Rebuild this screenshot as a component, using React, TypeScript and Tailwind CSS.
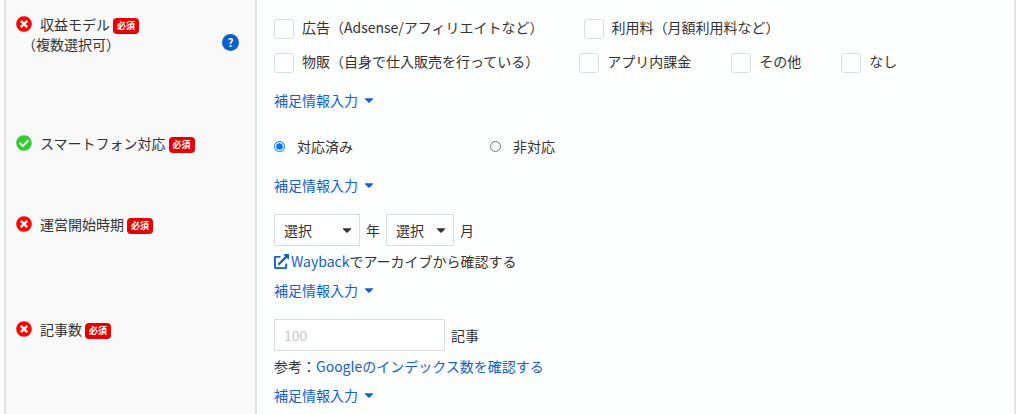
import type { ReactNode } from 'react';
import { FaCaretDown, FaCheckCircle, FaExternalLinkAlt, FaTimesCircle } from 'react-icons/fa';

interface FormRowProps {
  title: string;
  note?: string;
  done?: boolean;
  last?: boolean;
  children: ReactNode;
}

const MODEL_ROWS = [
  ['広告（Adsense/アフィリエイトなど）', '利用料（月額利用料など）'],
  ['物販（自身で仕入販売を行っている）', 'アプリ内課金', 'その他', 'なし'],
];

/**
 * One row of the form: heading cell on the left, inputs on the right
 */
function FormRow({ title, note, done, last, children }: FormRowProps) {
  return (
    <div className={last ? 'flex grow' : 'flex'}>
      <div className="w-[253px] shrink-0 border-x-2 border-[#e2e2e2] bg-[#f9f9f9] pt-3.5 pr-4 pl-2.5">
        <div className="flex h-5 items-center">
          {done ? (
            <FaCheckCircle className="size-4 shrink-0 text-[#33cc33]" />
          ) : (
            <FaTimesCircle className="size-4 shrink-0 text-[#ff0000]" />
          )}
          <span className="ml-2">{title}</span>
          <span className="mt-1 ml-[3px] h-4 rounded bg-[#e60000] px-1 text-[9px] leading-4 font-bold text-white">
            必須
          </span>
        </div>
        {note && (
          <div className="flex items-start justify-between pl-1.5">
            <span>{note}</span>
            <button
              type="button"
              aria-label="ヘルプ"
              className="size-[17px] rounded-full bg-[#0b61d0] text-center text-[11px] leading-[17px] font-bold text-white"
            >
              ?
            </button>
          </div>
        )}
      </div>
      <div className="grow pt-3.5 pb-[5px] pl-[17px]">{children}</div>
    </div>
  );
}

function SupplementToggle() {
  return (
    <button type="button" className="flex h-5 items-center gap-1 text-[#1460cc]">
      補足情報入力
      <FaCaretDown className="size-3.5" />
    </button>
  );
}

function PeriodSelect({ label, wide }: { label: string; wide?: boolean }) {
  return (
    <div className="relative">
      <select
        aria-label={label}
        className={`h-8 appearance-none border border-[#d9dcdc] bg-white pl-[9px] ${wide ? 'w-[86px]' : 'w-[68px]'}`}
      >
        <option>選択</option>
      </select>
      <FaCaretDown className="pointer-events-none absolute top-[9px] right-1.5 size-3.5" />
    </div>
  );
}

export default function App() {
  return (
    <div className="min-h-screen bg-white px-1 font-['Noto_Sans_CJK_JP',sans-serif] text-[14px] leading-5 text-[#333333]">
      <form className="mr-1 flex min-h-screen flex-col border-r-2 border-[#e2e2e2] bg-[#fdfefe]">
        <FormRow title="収益モデル" note="（複数選択可）">
          <div className="mb-4 flex flex-col gap-2">
            {MODEL_ROWS.map((row, index) => (
              <div key={index} className="flex h-[26px] gap-10">
                {row.map((name) => (
                  <label key={name} className="flex items-center gap-2">
                    <input
                      type="checkbox"
                      className="mt-1 size-5 appearance-none rounded-[3px] border border-[#dcdfdf] bg-white"
                    />
                    {name}
                  </label>
                ))}
              </div>
            ))}
          </div>
          <div className="pb-1">
            <SupplementToggle />
          </div>
        </FormRow>

        <FormRow title="スマートフォン対応" done>
          <div className="mb-4 flex h-[26px]">
            <label className="flex w-[216px] items-center gap-3">
              <input type="radio" name="smartphone" defaultChecked className="size-[11px]" />
              対応済み
            </label>
            <label className="flex items-center gap-3">
              <input type="radio" name="smartphone" className="size-[11px]" />
              非対応
            </label>
          </div>
          <SupplementToggle />
        </FormRow>

        <FormRow title="運営開始時期">
          <div className="mb-[5px] flex items-center gap-1.5">
            <PeriodSelect label="開始年" wide />
            <span>年</span>
            <PeriodSelect label="開始月" />
            <span>月</span>
          </div>
          <p className="mb-[9px] flex items-center">
            <a href="#wayback" className="flex items-center gap-0.5 text-[#1460cc]">
              <FaExternalLinkAlt className="size-[15px]" />
              Wayback
            </a>
            でアーカイブから確認する
          </p>
          <SupplementToggle />
        </FormRow>

        <FormRow title="記事数" last>
          <label className="mb-[5px] flex items-center gap-1.5">
            <input
              type="text"
              placeholder="100"
              className="h-8 w-[171px] border border-[#d9dcdc] bg-white px-[9px] placeholder:text-[#c6c8c8]"
            />
            記事
          </label>
          <p className="mb-[9px]">
            参考：
            <a href="#google-index" className="text-[#1460cc]">
              Googleのインデックス数を確認する
            </a>
          </p>
          <SupplementToggle />
        </FormRow>
      </form>
    </div>
  );
}
